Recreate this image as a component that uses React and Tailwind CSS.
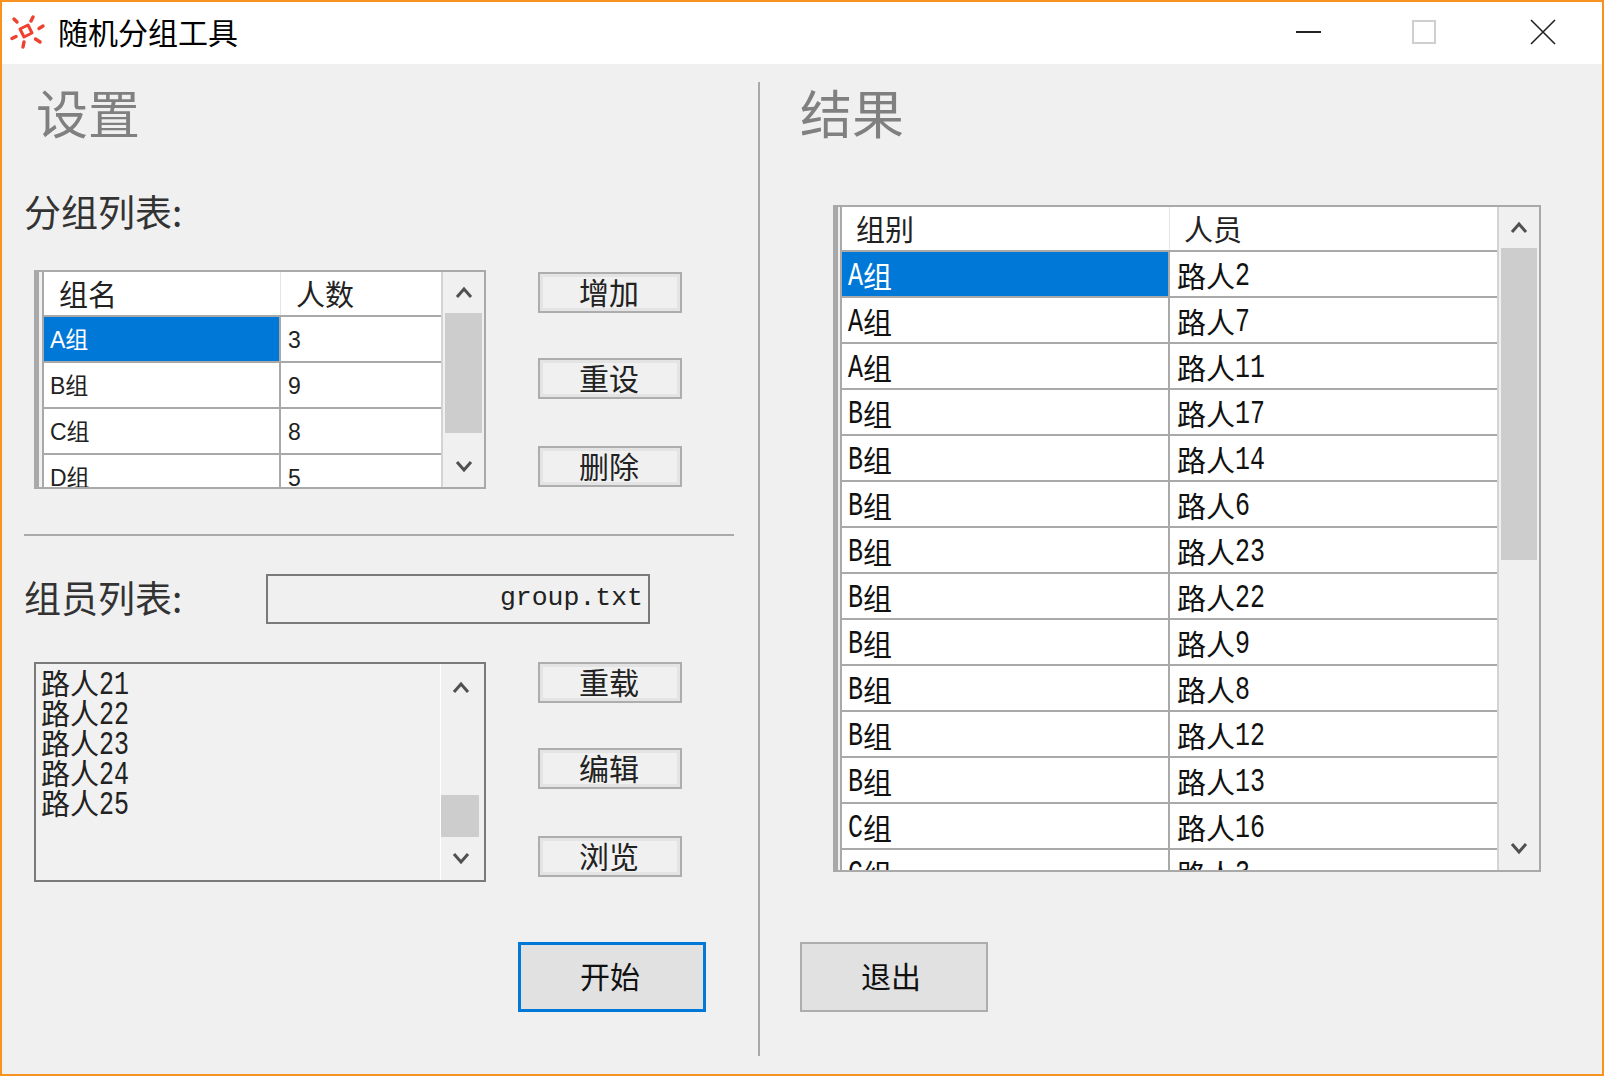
import React from 'react';

const SANS = 'font-["Noto_Sans_CJK_SC",sans-serif]';
const ARIAL = 'font-["Liberation_Sans","Noto_Sans_CJK_SC",sans-serif]';

const groupRows = [['A组', '3'], ['B组', '9'], ['C组', '8'], ['D组', '5']];
const resultRows = [
  ['A组', '路人2'], ['A组', '路人7'], ['A组', '路人11'], ['B组', '路人17'], ['B组', '路人14'],
  ['B组', '路人6'], ['B组', '路人23'], ['B组', '路人22'], ['B组', '路人9'], ['B组', '路人8'],
  ['B组', '路人12'], ['B组', '路人13'], ['C组', '路人16'], ['C组', '路人3'],
];
const members = ['路人21', '路人22', '路人23', '路人24', '路人25'];

// SimSun has half width, tall latin, so latin runs get a mono face stretched upward
const SimText = ({ text }) => (
  <span className="whitespace-nowrap">
    {text.split(/([A-Z0-9]+)/).filter(Boolean).map((part, i) =>
      /[A-Z0-9]/.test(part)
        ? <span key={i} className='inline-block origin-bottom translate-y-px scale-y-[1.3] font-["Liberation_Mono",monospace] text-[25px]'>{part}</span>
        : <span key={i} className={`${SANS} text-[29px]`}>{part}</span>
    )}
  </span>
);

const Chevron = ({ down }) => (
  <svg width="18" height="14" viewBox="0 0 18 14" fill="none" stroke="#505050" strokeWidth="3" strokeLinejoin="miter">
    <polyline points={down ? '2,3 9,11 16,3' : '2,11 9,3 16,11'} />
  </svg>
);

const Scrollbar = ({ upClass, thumbClass, beforeClass = '', downClass, className = '' }) => (
  <div className={`flex flex-col shrink-0 bg-[#f0f0f0] ${className}`}>
    <div className={`flex items-center justify-center shrink-0 ${upClass}`}><Chevron /></div>
    {beforeClass && <div className={`shrink-0 ${beforeClass}`} />}
    <div className={`shrink-0 bg-[#cdcdcd] ${thumbClass}`} />
    <div className="flex-1" />
    <div className={`flex items-center justify-center shrink-0 ${downClass}`}><Chevron down /></div>
  </div>
);

const SmallButton = ({ label, className = '' }) => (
  <div className={`flex items-center justify-center w-[144px] h-[41px] pb-[4px] pr-[2px] border-2 border-[#adadad] bg-[#f0f0f0] shadow-[inset_0_0_0_3px_#e4e4e4] text-[30px] leading-none text-[#222] ${SANS} ${className}`}>
    {label}
  </div>
);

const BigButton = ({ label, focused, className = '' }) => (
  <div className={`flex items-center justify-center w-[188px] h-[70px] pb-[4px] bg-[#e1e1e1] text-[30px] leading-none text-[#111] ${SANS} ${focused ? 'pr-[4px] border-[3px] border-[#0078d7]' : 'pr-[6px] border-2 border-[#adadad]'} ${className}`}>
    {label}
  </div>
);

const Cell = ({ className = '', children }) => (
  <div className={`flex items-center h-full shrink-0 overflow-hidden ${className}`}>{children}</div>
);

const App = () => (
  <div className="w-[1604px] h-[1076px] border-2 border-[#f7931e] flex flex-col bg-[#f0f0f0] overflow-hidden">
    {/* title bar */}
    <div className="h-[62px] shrink-0 bg-white flex items-center">
      <svg className="ml-[8px] mb-[2px] shrink-0" width="36" height="34" viewBox="0 0 36 34" fill="none" stroke="#f0402e" strokeWidth="3.4" strokeLinecap="round">
        <path d="M4 4 L7 7" />
        <path d="M23 2 L21 6" />
        <path d="M33 11 L29 13.5" />
        <path d="M30 27 L25.5 24" />
        <path d="M13 32 L14 27" />
        <path d="M2 23.5 L6 21.5" />
        <path d="M10 14 L18 10 L22 18 L14 22 Z" strokeWidth="3" strokeLinejoin="round" />
      </svg>
      <div className={`ml-[12px] mb-[5px] text-[30px] leading-none text-black ${SANS}`}>随机分组工具</div>
      <div className="ml-auto mb-[3px] flex items-center shrink-0">
        <div className="w-[25px] h-[2px] bg-[#222]" />
        <div className="ml-[91px] w-[24px] h-[24px] border-2 border-[#cfcfcf]" />
        <svg className="ml-[94px] mr-[46px]" width="26" height="26" viewBox="0 0 26 26" stroke="#222" strokeWidth="1.6">
          <path d="M1 1 L25 25 M25 1 L1 25" />
        </svg>
      </div>
    </div>

    <div className="flex-1 flex">
      {/* left panel */}
      <div className="w-[757px] shrink-0 pl-[22px] flex flex-col">
        <div className={`mt-[18px] ml-[12px] h-[60px] flex items-center text-[52px] leading-none text-[#808080] ${SANS}`}>设置</div>
        <div className={`mt-[47px] h-[44px] flex items-center text-[37px] leading-none text-[#333] ${SANS}`}>分组列表:</div>

        <div className="mt-[37px] flex items-start">
          <div className="ml-[10px] w-[452px] h-[219px] border-2 border-[#a9a9a9] flex bg-white shrink-0">
            <div className="w-[8px] shrink-0 bg-[#f0f0f0] border-l-[3px] border-r-[2px] border-[#a9a9a9]" />
            <div className="w-[397px] shrink-0 overflow-hidden">
              <div className={`h-[45px] flex border-b-2 border-[#a9a9a9] text-[29px] leading-none text-[#222] ${SANS}`}>
                <Cell className="w-[237px] pl-[15px] border-r border-[#e5e5e5]">组名</Cell>
                <Cell className="flex-1 pl-[15px]">人数</Cell>
              </div>
              {groupRows.map(([name, count], i) => (
                <div key={name} className={`h-[46px] flex border-b-2 border-[#a9a9a9] text-[23px] leading-none text-[#222] ${ARIAL}`}>
                  <Cell className={`w-[237px] pl-[6px] pt-[2px] border-r-2 border-[#a9a9a9] ${i === 0 ? 'bg-[#0078d7] text-white' : ''}`}>{name}</Cell>
                  <Cell className="flex-1 pl-[7px] pt-[2px]">{count}</Cell>
                </div>
              ))}
            </div>
            <Scrollbar className="flex-1 border-l-2 border-[#a9a9a9]/40" upClass="h-[41px]" thumbClass="h-[120px] mx-[2px]" downClass="h-[42px]" />
          </div>
          <div className="ml-[52px] flex flex-col shrink-0">
            <SmallButton label="增加" className="mt-[2px]" />
            <SmallButton label="重设" className="mt-[45px]" />
            <SmallButton label="删除" className="mt-[47px]" />
          </div>
        </div>

        <div className="mt-[45px] w-[710px] h-[2px] bg-[#a9a9a9]" />

        <div className="mt-[38px] h-[50px] flex items-center">
          <div className={`w-[242px] shrink-0 pb-[4px] text-[37px] leading-none text-[#333] ${SANS}`}>组员列表:</div>
          <div className='w-[384px] h-full shrink-0 border-2 border-[#7a7a7a] flex items-center justify-end pr-[5px] font-["Liberation_Mono",monospace] text-[26.5px] text-[#222]'>
            group.txt
          </div>
        </div>

        <div className="mt-[38px] flex items-start">
          <div className="ml-[10px] w-[452px] h-[220px] border-2 border-[#7a7a7a] flex shrink-0 bg-[#f1f1f1]">
            <div className="w-[404px] shrink-0 pl-[5px] pt-[5px] flex flex-col text-[#222]">
              {members.map(m => (
                <div key={m} className="h-[30px] flex items-center leading-none"><SimText text={m} /></div>
              ))}
            </div>
            <Scrollbar className="flex-1 border-l border-white" upClass="h-[48px] pr-[4px]" beforeClass="h-[83px]" thumbClass="h-[42px] mr-[5px]" downClass="h-[42px] pb-[3px] pr-[4px]" />
          </div>
          <div className="ml-[52px] flex flex-col shrink-0">
            <SmallButton label="重载" />
            <SmallButton label="编辑" className="mt-[45px]" />
            <SmallButton label="浏览" className="mt-[47px]" />
          </div>
        </div>

        <BigButton label="开始" focused className="mt-[60px] ml-[494px]" />
      </div>

      <div className="w-[2px] shrink-0 mt-[18px] mb-[18px] -ml-px bg-[#a9a9a9]" />

      {/* right panel */}
      <div className="flex-1 flex flex-col">
        <div className={`mt-[18px] ml-[40px] h-[60px] flex items-center text-[52px] leading-none text-[#808080] ${SANS}`}>结果</div>

        <div className="mt-[63px] ml-[73px] w-[708px] h-[667px] border-2 border-[#a9a9a9] flex bg-white shrink-0">
          <div className="w-[7px] shrink-0 bg-[#f0f0f0] border-l-[3px] border-r-[2px] border-[#a9a9a9]" />
          <div className="w-[655px] shrink-0 overflow-hidden">
            <div className={`h-[45px] flex border-b-2 border-[#a9a9a9] text-[29px] leading-none text-[#222] ${SANS}`}>
              <Cell className="w-[328px] pl-[14px] border-r border-[#e5e5e5]">组别</Cell>
              <Cell className="flex-1 pl-[14px]">人员</Cell>
            </div>
            {resultRows.map(([group, person], i) => (
              <div key={person} className="h-[46px] flex border-b-2 border-[#a9a9a9] text-[#111]">
                <Cell className={`w-[328px] pl-[6px] pt-[6px] border-r-2 border-[#a9a9a9] ${i === 0 ? 'bg-[#0078d7] text-white' : ''}`}><SimText text={group} /></Cell>
                <Cell className="flex-1 pl-[7px] pt-[6px]"><SimText text={person} /></Cell>
              </div>
            ))}
          </div>
          <Scrollbar className="flex-1 border-l-2 border-[#a9a9a9]/40" upClass="h-[41px]" thumbClass="h-[312px] mx-[2px]" downClass="h-[44px]" />
        </div>

        <BigButton label="退出" className="mt-[70px] ml-[40px]" />
      </div>
    </div>
  </div>
);

export default App;
